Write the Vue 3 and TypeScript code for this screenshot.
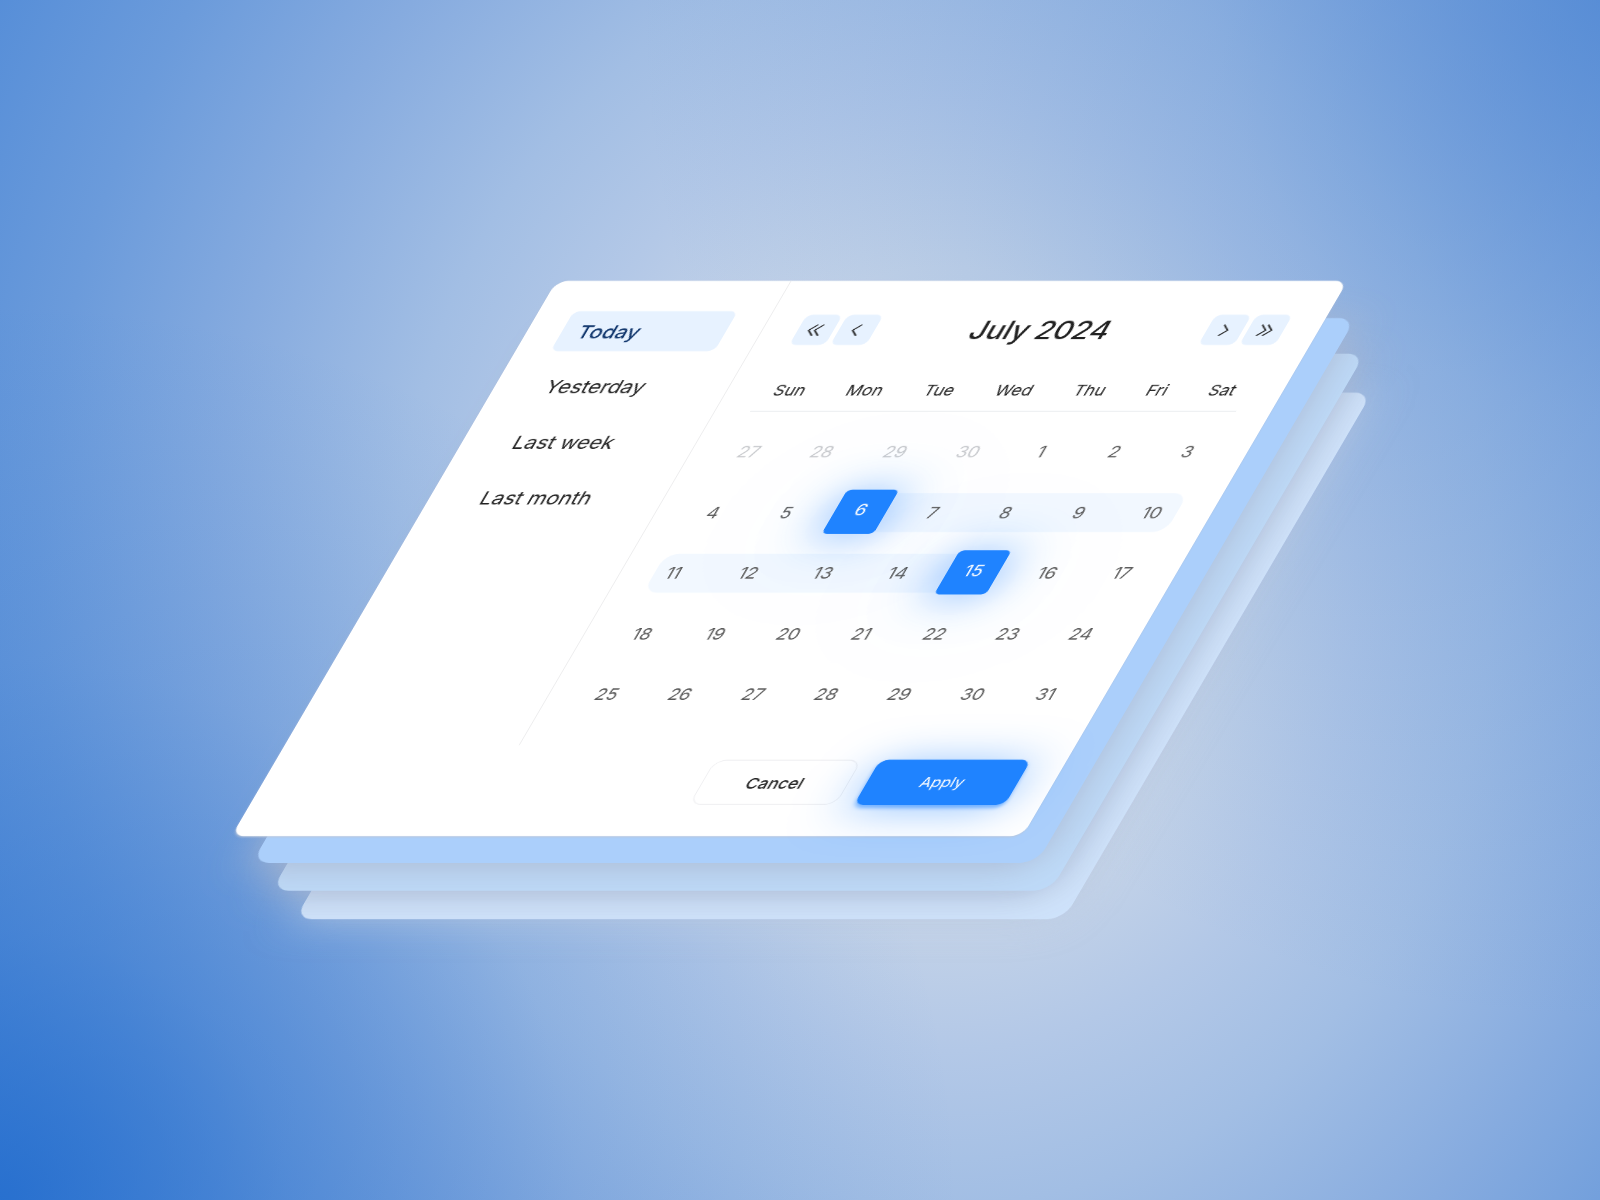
<script setup lang="ts">
import { ref } from 'vue'

interface Day {
  label: number
  outside?: boolean
}

const presets: string[] = ['Today', 'Yesterday', 'Last week', 'Last month']
const activePreset = ref<string>('Today')

const weekdays: string[] = ['Sun', 'Mon', 'Tue', 'Wed', 'Thu', 'Fri', 'Sat']

const leading: Day[] = [27, 28, 29, 30].map((label) => ({ label, outside: true }))
const month: Day[] = Array.from({ length: 31 }, (_, i) => ({ label: i + 1 }))
const days: Day[] = [...leading, ...month]
const weeks: Day[][] = Array.from({ length: 5 }, (_, w) => days.slice(w * 7, w * 7 + 7))

const rangeStart = 6
const rangeEnd = 15

function isEdge(day: Day): boolean {
  return !day.outside && (day.label === rangeStart || day.label === rangeEnd)
}

function rowClass(week: Day[]): string {
  if (week.some((d) => !d.outside && d.label === rangeStart)) return 'week range-from'
  if (week.some((d) => !d.outside && d.label === rangeEnd)) return 'week range-to'
  return 'week'
}
</script>

<template>
  <main class="stage">
    <div class="board">
      <div class="layer layer-low"></div>
      <div class="layer layer-mid"></div>
      <div class="layer layer-top"></div>

      <section class="picker" aria-label="Date range">
        <div class="body">
          <nav class="presets" aria-label="Presets">
            <button
              v-for="p in presets"
              :key="p"
              type="button"
              class="preset"
              :class="{ active: p === activePreset }"
              @click="activePreset = p"
            >
              {{ p }}
            </button>
          </nav>

          <div class="calendar">
            <header class="head">
              <div class="steps">
                <button type="button" class="step" aria-label="Previous year">
                  <svg viewBox="0 0 18 18"><path d="M8 3 2 9l6 6M14 3 8 9l6 6" /></svg>
                </button>
                <button type="button" class="step" aria-label="Previous month">
                  <svg viewBox="0 0 18 18"><path d="M11 3 5 9l6 6" /></svg>
                </button>
              </div>
              <h1 class="title">July 2024</h1>
              <div class="steps">
                <button type="button" class="step" aria-label="Next month">
                  <svg viewBox="0 0 18 18"><path d="M6 3l6 6-6 6" /></svg>
                </button>
                <button type="button" class="step" aria-label="Next year">
                  <svg viewBox="0 0 18 18"><path d="M3 3l6 6-6 6M9 3l6 6-6 6" /></svg>
                </button>
              </div>
            </header>

            <table class="grid">
              <thead>
                <tr class="weekdays">
                  <th v-for="w in weekdays" :key="w" scope="col">{{ w }}</th>
                </tr>
              </thead>
              <tbody>
                <tr v-for="(week, i) in weeks" :key="i" :class="rowClass(week)">
                  <td v-for="day in week" :key="day.label">
                    <button
                      type="button"
                      class="day"
                      :class="{ outside: day.outside, edge: isEdge(day) }"
                    >
                      {{ day.label }}
                    </button>
                  </td>
                </tr>
              </tbody>
            </table>
          </div>
        </div>

        <footer class="actions">
          <button type="button" class="action cancel">Cancel</button>
          <button type="button" class="action apply">Apply</button>
        </footer>
      </section>
    </div>
  </main>
</template>

<style>
body {
  margin: 0;
}
</style>

<style scoped>
.stage {
  box-sizing: border-box;
  min-height: 100vh;
  display: flex;
  align-items: center;
  justify-content: center;
  padding: 0 22px 83px 0;
  overflow: hidden;
  font-family: Inter, "Liberation Sans", sans-serif;
  color: #222;
  background:
    radial-gradient(
      ellipse 60% 75% at 0% 100%,
      rgba(26, 103, 204, 0.76) 0%,
      rgba(26, 103, 204, 0.38) 30%,
      rgba(26, 103, 204, 0.14) 60%,
      rgba(26, 103, 204, 0) 100%
    ),
    radial-gradient(
      ellipse 60% 85% at 100% 0%,
      rgba(68, 128, 209, 0.6) 0%,
      rgba(68, 128, 209, 0.27) 40%,
      rgba(68, 128, 209, 0) 100%
    ),
    radial-gradient(
      ellipse 60% 92% at 59% 48%,
      #cbd7e7 0%,
      #c7d5e8 28%,
      #b3c8e7 43%,
      #a2bee4 57%,
      #86abdf 76%,
      #6b9bdb 94%,
      #568ed8 112%,
      #4f8ad6 150%
    );
}

.board {
  position: relative;
  width: 100%;
  max-width: 791px;
  transform: skewX(-30.35deg) rotateX(30deg);
}

.layer {
  position: absolute;
  border-radius: 17px;
  box-shadow: 0 4px 40px rgba(168, 182, 206, 0.9);
}

.layer-low {
  inset: 129px -90px -96px 112px;
  background: #cfe3fb;
  box-shadow: 0 4px 40px rgba(190, 204, 226, 0.55);
}

.layer-mid {
  inset: 84px -60px -63px 72px;
  background: #bedaf8;
}

.layer-top {
  inset: 43px -30px -31px 36px;
  background: #abcffb;
}

.picker {
  position: relative;
  border-radius: 12px;
  background: #fff;
  box-shadow: 0 1px 2px rgba(190, 200, 215, 0.7);
}

.body {
  display: flex;
}

.presets {
  flex: none;
  box-sizing: border-box;
  width: 235px;
  padding: 35px;
  border-right: 1px solid #ededee;
  display: flex;
  flex-direction: column;
  gap: 18px;
}

button {
  margin: 0;
  padding: 0;
  border: 0;
  background: none;
  font: inherit;
  color: inherit;
  cursor: pointer;
}

.preset {
  height: 46px;
  padding: 1px 17px 0;
  border-radius: 7px;
  text-align: left;
  font-size: 21px;
}

.preset.active {
  background: #e7f2ff;
  color: #14396f;
  font-weight: 500;
}

.calendar {
  flex: 1;
  padding: 39px 35px 24px;
}

.head {
  display: flex;
  align-items: center;
  justify-content: space-between;
  height: 35px;
}

.steps {
  display: flex;
  gap: 5px;
}

.step {
  width: 36px;
  height: 35px;
  border-radius: 7px;
  background: #e7f2ff;
  display: flex;
  align-items: center;
  justify-content: center;
}

.step svg {
  width: 18px;
  height: 18px;
  fill: none;
  stroke: #222;
  stroke-width: 1.5;
  stroke-linecap: round;
  stroke-linejoin: round;
}

.title {
  margin: 0;
  font-size: 29px;
  font-weight: 500;
}

.grid {
  display: block;
  margin-top: 30px;
}

.grid thead,
.grid tbody {
  display: block;
}

.weekdays {
  display: flex;
  justify-content: space-between;
  padding: 0 13px 2px 12px;
  border-bottom: 1px solid #ebedf0;
}

.weekdays th {
  padding: 0;
  font-size: 17px;
  font-weight: 400;
  line-height: 44px;
}

.grid tbody {
  padding-top: 11px;
}

.week {
  position: relative;
  z-index: 0;
  display: flex;
  margin: 0 -12px 0 -14px;
}

.week td {
  flex: 1;
  height: 70px;
  padding: 0;
  display: flex;
  align-items: center;
  justify-content: center;
}

.range-to {
  margin: 0 -18px 0 -19px;
}

.range-from::before,
.range-to::before {
  content: "";
  position: absolute;
  z-index: -1;
  height: 45px;
  top: 13px;
  background: rgba(31, 131, 255, 0.06);
}

.range-from::before {
  left: 36%;
  right: 12px;
  border-radius: 0 14px 14px 0;
}

.range-to::before {
  left: 18px;
  right: 35%;
  border-radius: 14px 0 0 14px;
}

.day {
  width: 52px;
  height: 51px;
  font-size: 18px;
  color: #5a5a5a;
}

.day.outside {
  color: #c8cacd;
}

.day.edge {
  margin-bottom: 1px;
  padding-bottom: 4px;
  border-radius: 5px;
  background: #1f83ff;
  color: #fff;
  box-shadow:
    0 2px 50px rgba(31, 131, 255, 0.6),
    0 8px 160px rgba(31, 131, 255, 0.2);
}

.actions {
  display: flex;
  align-items: flex-start;
  justify-content: flex-end;
  gap: 18px;
  padding: 17px 36px 36px;
}

.action {
  box-sizing: border-box;
  height: 52px;
  border-radius: 12px;
  font-size: 17px;
}

.cancel {
  width: 147px;
  padding-top: 1px;
  border: 1px solid #f0f0f2;
  font-weight: 500;
}

.apply {
  width: 151px;
  background: #1f83ff;
  color: #fff;
  font-size: 16px;
  border-radius: 9px;
  box-shadow:
    0 3px 4px rgba(31, 131, 255, 0.5),
    0 4px 50px rgba(31, 131, 255, 0.5);
}
</style>
